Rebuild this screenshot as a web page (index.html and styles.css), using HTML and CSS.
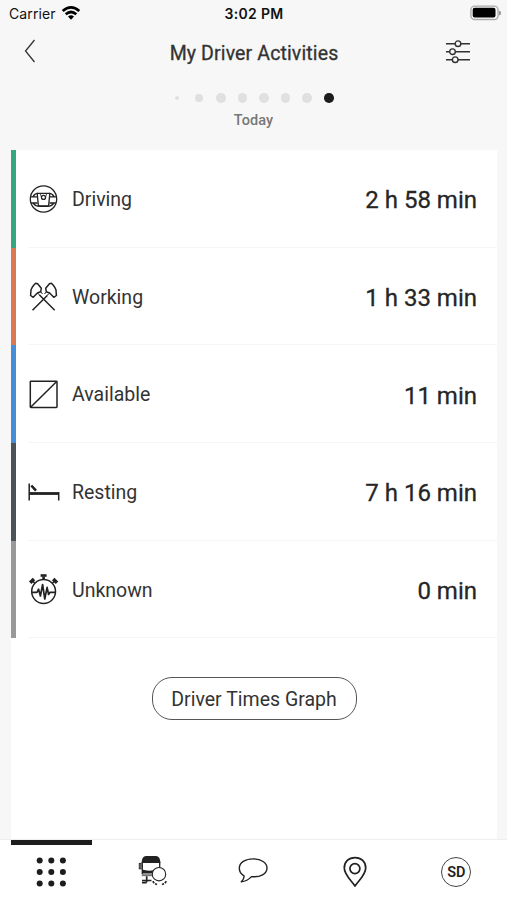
FILE: index.html
```html
<!DOCTYPE html>
<html lang="en">
<head>
<meta charset="utf-8">
<title>My Driver Activities</title>
<link rel="stylesheet" href="styles.css">
</head>
<body>
<div class="app">
  <div class="status">
    <div class="carrier"><span>Carrier</span>
      <svg width="20" height="16" viewBox="0 0 20 16" fill="none" stroke="#000" stroke-width="2.7"><path d="M1.7 6.1Q10 -1.3 18.3 6.1M4.7 9.3Q10 4.7 15.3 9.3"/><path d="M7 11.6Q10 9 13 11.6L10 14.7Z" fill="#000" stroke="none"/></svg>
    </div>
    <div class="clock">3:02 PM</div>
    <svg class="battery" width="32" height="16" viewBox="0 0 32 16"><rect x=".9" y="1.1" width="27.2" height="13.4" rx="3.8" fill="#f7f7f7" stroke="#aaa" stroke-width="1.4"/><rect x="2.7" y="2.8" width="22.8" height="9.8" rx="2" fill="#000"/><path d="M29 5.5Q31.2 6 31.2 8T29 10.5Z" fill="#999"/></svg>
  </div>
  <header class="header">
    <svg class="back" width="12" height="24" viewBox="0 0 12 24" fill="none" stroke="#333" stroke-width="1.3"><path d="M10.5 1L1.5 12L10.5 23"/></svg>
    <h1>My Driver Activities</h1>
    <svg class="filter" width="26" height="26" viewBox="0 0 26 26" fill="#f7f7f7" stroke="#333" stroke-width="1.4"><path d="M1 4.7H25M1 12.7H25M1 20.7H25"/><circle cx="13" cy="4.7" r="2.8"/><circle cx="7.5" cy="12.7" r="2.8"/><circle cx="10.2" cy="20.7" r="2.8"/></svg>
  </header>
  <div class="pager"><i class="tiny"></i><i class="small"></i><i></i><i></i><i></i><i></i><i></i><i class="active"></i></div>
  <div class="day">Today</div>
  <main class="panel">
    <section class="row driving">
      <svg width="32" height="32" viewBox="0 0 32 32" fill="none" stroke="#222" stroke-width="1.3"><circle cx="15.5" cy="16" r="13.2"/><path d="M2.5 13.8H9.3M21.7 13.8H28.5M3 20H9.5M21.5 20H28M5 13.6Q6.5 10.6 10 10.2M26 13.6Q24.5 10.6 21 10.2M5.3 20.3Q7.5 23.3 11.5 23.3H19.5Q23.5 23.3 25.7 20.3"/><path d="M10.3 10.4H20.7Q21.8 10.4 21.7 11.5L20.7 21.9Q20.6 23 19.5 23H11.5Q10.4 23 10.3 21.9L9.3 11.5Q9.2 10.4 10.3 10.4Z"/><path d="M12.3 10.5L13.3 14M18.7 10.5L17.7 14"  stroke-width=".8"/><circle cx="15.5" cy="14.4" r="2"/></svg>
      <span class="label">Driving</span><span class="time">2 h 58 min</span>
    </section>
    <section class="row working">
      <svg width="32" height="32" viewBox="0 0 32 32" fill="none" stroke="#222" stroke-width="1.5" stroke-linejoin="round"><path d="M4.5 29.3L19.3 14.5M26.7 29.3L11.5 14"/><path d="M2.6 14.5L3 9Q3.6 6.8 5.5 4.5L7.6 2.3L9.6 2.8L13.3 7.3L12.7 10.7L9.4 12L5.2 16.3Z"/><path d="M28.4 14.5L28 9Q27.4 6.8 25.5 4.5L23.4 2.3L21.4 2.8L17.7 7.3L18.3 10.7L21.6 12L25.8 16.3Z"/><path d="M9.4 12L12.3 14.8M12.7 10.7L14.5 13M21.6 12L18.7 14.8M18.3 10.7L16.5 13" stroke-width="1"/></svg>
      <span class="label">Working</span><span class="time">1 h 33 min</span>
    </section>
    <section class="row available">
      <svg width="32" height="32" viewBox="0 0 32 32" fill="none" stroke="#222" stroke-width="1.5"><rect x="2.3" y="2.2" width="26.7" height="26.3" rx=".7"/><path d="M2.6 28.2L28.7 2.5"/></svg>
      <span class="label">Available</span><span class="time">11 min</span>
    </section>
    <section class="row resting">
      <svg width="32" height="32" viewBox="0 0 32 32" fill="none" stroke="#222"><path d="M1.2 7.5V24.5M30.7 16V24.5" stroke-width="1.5"/><path d="M1 17.5H31" stroke-width="2.8"/><path d="M3.3 9.5L8 14.7" stroke-width="2.6"/></svg>
      <span class="label">Resting</span><span class="time">7 h 16 min</span>
    </section>
    <section class="row unknown">
      <svg width="32" height="32" viewBox="0 0 32 32" fill="none" stroke="#222" stroke-width="1.5"><circle cx="15.6" cy="17.5" r="11.9"/><path d="M3.8 18.3H9L10.6 15.2L12.4 22L14.6 10.5L16.8 25L19.1 13.3L20.6 20.5L22 18.3H27.4" stroke-width="1.7" stroke-linejoin="round"/><path d="M12.6 1.5H18.6" stroke-width="2.6"/><path d="M15.6 2.5V6" stroke-width="2.6"/><path d="M2.2 8.8L6 5M29 8.8L25.2 5" stroke-width="3.5"/><path d="M3.9 6.3L6.8 9.2M27.3 6.3L24.4 9.2" stroke-width="1.5"/></svg>
      <span class="label">Unknown</span><span class="time">0 min</span>
    </section>
    <button class="graph">Driver Times Graph</button>
  </main>
  <nav class="nav">
    <div class="tab current"><svg width="32" height="32" viewBox="0 0 32 32" fill="#1d1d1d"><circle cx="4.7" cy="3.4" r="3"/><circle cx="16.3" cy="3.4" r="3"/><circle cx="27.9" cy="3.4" r="3"/><circle cx="4.7" cy="15" r="3"/><circle cx="16.3" cy="15" r="3"/><circle cx="27.9" cy="15" r="3"/><circle cx="4.7" cy="26.6" r="3"/><circle cx="16.3" cy="26.6" r="3"/><circle cx="27.9" cy="26.6" r="3"/></svg></div>
    <div class="tab"><svg width="32" height="32" viewBox="0 0 32 32" fill="none" stroke="#222"><path d="M5.6 6Q5.8 -1 10 -1H20Q24.2 -1 24.4 6Z" fill="#222" stroke="none"/><path d="M6.3 5V17M23.7 5V13" stroke-width="1.3"/><rect x="3.2" y="6.3" width="1.9" height="5.6" fill="#777" stroke-width=".8"/><path d="M6 12.6Q11 14.3 18 13.3V16.4H6Z" fill="#222" stroke="none"/><path d="M5.7 18.2H17" stroke="#777" stroke-width="2"/><path d="M10.7 19.2V25.2M6 23.5H15.5M6 25.6H10.7" stroke-width="1.7"/><path d="M16.7 24.3L18.6 26.5L21 27.5M30.4 24.3L28.5 26.5L26 27.5" stroke-width="1.6" stroke-dasharray="2.4 1"/><circle cx="23" cy="17.2" r="6.7" fill="#fff" stroke-width="1.1"/></svg></div>
    <div class="tab"><svg width="32" height="32" viewBox="0 0 32 32" fill="none" stroke="#222" stroke-width="1.4" stroke-linejoin="round"><path d="M4.3 24.8Q7.5 21.8 7 18.8C3.6 16.9 2.3 14.7 2.3 11.3C2.3 5.5 8.3 1.9 16.4 1.9C24.2 1.9 30 5.8 30 11C30 16.8 23.6 20.5 14.4 19.6Q10.3 24.1 4.3 24.8Z"/></svg></div>
    <div class="tab"><svg width="32" height="32" viewBox="0 0 32 32" fill="none" stroke="#222" stroke-width="1.7"><path d="M16 29C12.5 23.5 5.3 18 5.3 11C5.3 4.7 9.7 .6 16 .6S26.7 4.7 26.7 11C26.7 18 19.5 23.5 16 29Z" stroke-linejoin="round"/><circle cx="15.9" cy="11.6" r="5"/></svg></div>
    <div class="tab"><span class="avatar">SD</span></div>
  </nav>
</div>
</body>
</html>
```
FILE: styles.css
```css
* { box-sizing: border-box; }
body { margin: 0; background: #f7f7f7; color: #222; font-family: Roboto, "Liberation Sans", sans-serif; }
svg { display: block; flex: none; overflow: visible; }
.app { width: 507px; height: 900px; display: flex; flex-direction: column; overflow: hidden; }
.status { height: 28px; display: grid; grid-template-columns: 1fr 80px 1fr; align-items: center; padding: 0 5px 0 9px; font-family: Inter, sans-serif; color: #111; }
.carrier { display: flex; align-items: center; gap: 6px; font-size: 14px; line-height: 18px; letter-spacing: .1px; }
.carrier svg { margin: -2px 0 0 -1px; }
.clock { font-size: 14px; font-weight: 600; text-align: center; white-space: nowrap; letter-spacing: .3px; margin: -1px 0 0 -3px; }
.battery { justify-self: end; margin-top: -2px; }
.header { height: 49px; display: grid; grid-template-columns: 52px 1fr 52px; align-items: center; padding: 0 13px 0 24px; }
.header h1 { margin: 0 0 0 -10px; padding-top: 3px; font-size: 19.5px; line-height: 26px; font-weight: 400; -webkit-text-stroke: .3px #333; letter-spacing: .13px; text-align: center; white-space: nowrap; color: #333; }
.back { margin-top: -3px; }
.filter { margin: -1px 0 0 3px; }
.pager { height: 42px; display: flex; align-items: center; justify-content: center; gap: 12px; padding-left: 2px; }
.pager i { width: 9.6px; height: 9.6px; border-radius: 50%; background: #e0e0e0; }
.pager .small { width: 7.5px; height: 7.5px; margin: 0 1px 0 2px; }
.pager .tiny { width: 4px; height: 4px; margin-right: 2px; }
.pager .active { background: #1d1d1d; }
.day { height: 31px; font-size: 14.5px; line-height: 1; font-weight: 500; text-align: center; color: #777; letter-spacing: .1px; margin-top: -5px; }
.panel { width: 486px; height: 689px; margin: 5px 0 0 11px; background: #fff; display: flex; flex-direction: column; align-items: center; }
.row { width: 100%; height: 97.7px; flex: none; display: flex; align-items: center; padding: 1px 20px 0 12px; border-left: 5px solid; background: linear-gradient(#f5f5f5, #f5f5f5) no-repeat 12px 100% / 100% 1px; }
.driving { border-left-color: #35a780; }
.working { border-left-color: #d97851; }
.available { border-left-color: #478ed8; }
.resting { border-left-color: #4b5357; }
.unknown { border-left-color: #999; }
.label { margin-left: 12px; padding-top: 1px; font-size: 19.5px; line-height: 24px; color: #333; }
.time { margin-left: auto; padding-top: 2px; font-size: 24px; line-height: 28px; font-weight: 400; -webkit-text-stroke: .3px #262626; white-space: nowrap; color: #262626; }
.graph { width: 205px; height: 43px; margin-top: 39px; padding: 2px 0 0; border: 1.5px solid #555; border-radius: 20px; background: #fff; color: #333; font: 400 19.5px/24px Roboto, sans-serif; white-space: nowrap; }
.nav { height: 61px; flex: none; display: grid; grid-template-columns: repeat(5, 1fr); background: #fff; border-top: 1px solid #eee; }
.tab { display: flex; justify-content: center; align-items: flex-start; padding-top: 17px; }
.current { position: relative; }
.current::before { content: ""; position: absolute; left: 11px; top: 0; width: 81px; height: 5px; background: #1d1d1d; }
.avatar { width: 30px; height: 30px; border: 1px solid #444; border-radius: 50%; display: flex; align-items: center; justify-content: center; font-size: 14.5px; font-weight: 600; color: #222; }
```
